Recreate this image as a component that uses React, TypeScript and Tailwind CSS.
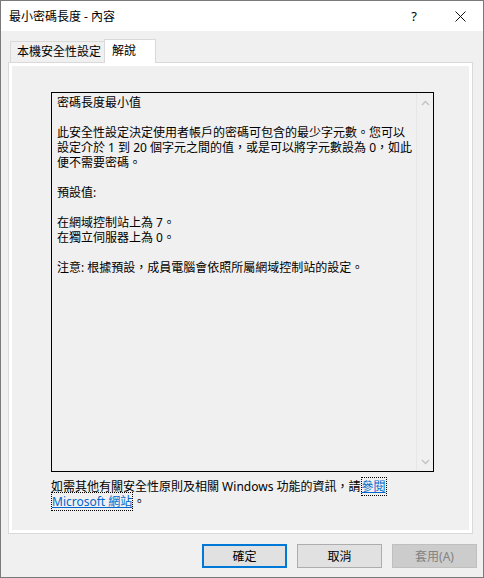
import React from "react";

const lines = [
  "密碼長度最小值",
  "",
  "此安全性設定決定使用者帳戶的密碼可包含的最少字元數。您可以",
  "設定介於 1 到 20 個字元之間的值，或是可以將字元數設為 0，如此",
  "便不需要密碼。",
  "",
  "預設值:",
  "",
  "在網域控制站上為 7。",
  "在獨立伺服器上為 0。",
  "",
  "注意: 根據預設，成員電腦會依照所屬網域控制站的設定。",
];

function Chevron({ up }: { up?: boolean }) {
  return (
    <svg width="9" height="6" viewBox="0 0 9 6" fill="none">
      <path
        d={up ? "M1 5 L4.5 1.5 L8 5" : "M1 1 L4.5 4.5 L8 1"}
        stroke="#c2c2c2"
        strokeWidth="1.4"
      />
    </svg>
  );
}

export default function App() {
  return (
    <div
      lang="zh-TW"
      className="w-[484px] h-[578px] border border-[#7a7a7a] bg-[#f0f0f0] flex flex-col text-[12px] leading-[15px] text-black font-['Noto_Sans','Noto_Sans_CJK_TC',sans-serif] overflow-hidden"
    >
      {/* Title bar */}
      <div className="h-[30px] bg-white flex items-center shrink-0">
        <span className="pl-[8px] flex-1">最小密碼長度 - 內容</span>
        <div className="w-[46px] h-full flex items-center justify-center text-[13px]">?</div>
        <div className="w-[46px] h-full flex items-center justify-center">
          <svg width="11" height="11" viewBox="0 0 11 11">
            <path d="M0.5 0.5 L10.5 10.5 M10.5 0.5 L0.5 10.5" stroke="#111" strokeWidth="1" />
          </svg>
        </div>
      </div>

      {/* Tabs */}
      <div className="mt-[8px] h-[23px] flex items-end ml-[9px] shrink-0">
        <div className="h-[21px] w-[95px] border border-b-0 border-[#d9d9d9] bg-[#f0f0f0] pl-[6px] flex items-center pb-[1px]">
          本機安全性設定
        </div>
        <div className="relative z-10 -ml-px -mb-px h-[24px] w-[52px] border border-b-0 border-[#d9d9d9] bg-white pl-[7px] flex items-center pb-[3px]">
          解說
        </div>
      </div>

      {/* Panel */}
      <div className="ml-[7px] w-[465px] h-[472px] border border-[#d9d9d9] bg-white p-[3px] shrink-0">
        <div className="w-full h-full bg-[#f0f0f0] pt-[26px] pl-[39px] flex flex-col">
          <div className="w-[383px] h-[380px] border border-black flex">
            <div className="flex-1 pl-[5px] pt-[2px]">
              {lines.map((l, i) => (
                <div key={i} className="h-[15px] whitespace-pre">
                  {l}
                </div>
              ))}
            </div>
            <div className="w-[17px] border-l border-[#e6e6e6] flex flex-col items-center justify-between pt-[7px] pb-[6px]">
              <Chevron up />
              <Chevron />
            </div>
          </div>
          <div className="mt-[7px]">
            <div className="h-[15px] whitespace-pre">
              如需其他有關安全性原則及相關 Windows 功能的資訊，請
              <span className="text-[#0066cc] underline border border-dotted border-black box-decoration-clone">參閱</span>
            </div>
            <div className="h-[15px] whitespace-pre">
              <span className="text-[#0066cc] underline border border-dotted border-black">Microsoft 網站</span>。
            </div>
          </div>
        </div>
      </div>

      {/* Buttons */}
      <div className="mt-[10px] flex justify-end gap-[10px] pr-[6px] shrink-0">
        <div className="w-[85px] h-[24px] border-2 border-[#0078d7] bg-[#e1e1e1] flex items-center justify-center">
          確定
        </div>
        <div className="w-[85px] h-[24px] border border-[#adadad] bg-[#e1e1e1] flex items-center justify-center">
          取消
        </div>
        <div className="w-[85px] h-[24px] border border-[#bfbfbf] bg-[#cccccc] text-[#838383] flex items-center justify-center">
          套用(A)
        </div>
      </div>
    </div>
  );
}
